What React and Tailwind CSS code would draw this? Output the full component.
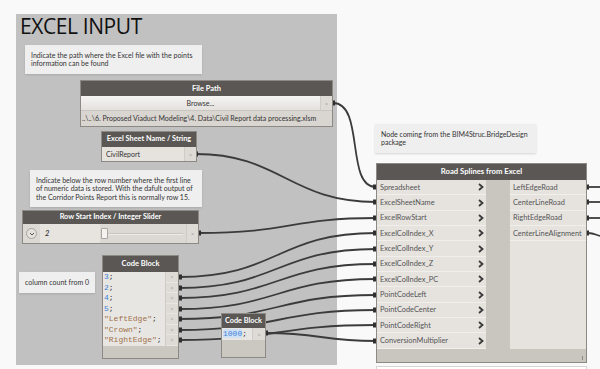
import React from "react";

const SANS = "font-['Lato','Open_Sans',sans-serif]";
const MONO = "font-['Liberation_Mono','DejaVu_Sans_Mono',monospace]";

function Port() {
  return (
    <div className="w-[12px] self-stretch flex items-center justify-center bg-[#dedad6] border-l border-[#cfcbc6] text-[6px] text-[#9a9692]">
      &gt;
    </div>
  );
}

function Chevron() {
  return (
    <svg width="6" height="8" viewBox="0 0 6 8" className="shrink-0">
      <path d="M1 1 L4.5 4 L1 7" fill="none" stroke="#3a3a3a" strokeWidth="1.8" />
    </svg>
  );
}

const inputs = [
  "Spreadsheet",
  "ExcelSheetName",
  "ExcelRowStart",
  "ExcelColIndex_X",
  "ExcelColIndex_Y",
  "ExcelColIndex_Z",
  "ExcelColIndex_PC",
  "PointCodeLeft",
  "PointCodeCenter",
  "PointCodeRight",
  "ConversionMultiplier",
];
const outputs = ["LeftEdgeRoad", "CenterLineRoad", "RightEdgeRoad", "CenterLineAlignment"];

const codeLines = [
  { t: "3", k: "n" },
  { t: "2", k: "n" },
  { t: "4", k: "n" },
  { t: "5", k: "n" },
  { t: '"LeftEdge"', k: "s" },
  { t: '"Crown"', k: "s" },
  { t: '"RightEdge"', k: "s" },
];

const codeY = [277, 288, 298, 309, 319, 330, 340];
const targetY = [233, 249, 264, 279, 295, 310, 325];

function wire(x1, y1, x2, y2) {
  const m = (x1 + x2) / 2;
  return `M${x1},${y1} C${m},${y1} ${m},${y2} ${x2},${y2}`;
}

export default function App() {
  const paths = [
    "M333,103 C365,103 345,187 376,187",
    "M196,154 C280,154 290,202 376,202",
    "M199,233 C290,233 290,218 376,218",
    ...codeY.map((y, i) => wire(179, y, 376, targetY[i])),
    wire(266, 333, 376, 341),
  ];
  const inPorts = [187, 202, 218, ...targetY, 341];
  return (
    <div className={`relative w-[600px] h-[369px] bg-[#f9f9f9] overflow-hidden ${SANS}`}>
      {/* group */}
      <div className="absolute left-[16px] top-[14px] w-[321px] h-[351px] bg-[#c1c1c1]">
        <div className="pl-[4px] text-[21px] leading-[24px] text-[#111] font-['Open_Sans',sans-serif] tracking-[-0.4px]">EXCEL INPUT</div>
      </div>

      {/* wires */}
      <svg className="absolute left-0 top-0" width="600" height="369">
        {paths.map((d, i) => (
          <path key={i} d={d} fill="none" stroke="#3b3b3b" strokeWidth="1.8" />
        ))}
        {inPorts.map((y, i) => (
          <rect key={i} x="373" y={y - 2.5} width="3" height="5" fill="#2f2f2f" />
        ))}
        {[187, 202, 218, 233].map((y, i) => (
          <g key={i}>
            <rect x="586" y={y - 2.5} width="3" height="5" fill="#2f2f2f" />
            <path d={i === 3 ? `M588,${y} C594,${y} 596,${y + 2} 600,${y + 3}` : `M588,${y} L600,${y}`} stroke="#3b3b3b" strokeWidth="1.8" fill="none" />
          </g>
        ))}
        {[103, 154, 233].map((y, i) => (
          <rect key={i} x={[332, 195, 198][i]} y={y - 2.5} width="3" height="5" fill="#2f2f2f" />
        ))}
        {codeY.map((y, i) => (
          <rect key={i} x="179" y={y - 2.5} width="3" height="5" fill="#2f2f2f" />
        ))}
        <rect x="265" y="330.5" width="3" height="5" fill="#2f2f2f" />
      </svg>

      {/* note 1 */}
      <div className="absolute left-[25px] top-[45px] w-[177px] h-[29px] bg-[#efefef] shadow-[0_1px_2px_rgba(0,0,0,0.12)] px-[6px] pt-[6px] text-[7px] leading-[8px] text-[#333] whitespace-nowrap">
        Indicate the path where the Excel file with the points
        <br />
        information can be found
      </div>

      {/* File Path node */}
      <div className="absolute left-[80px] top-[80px] w-[253px] border border-[#8d8a86] bg-[#d9d5d0] flex flex-col">
        <div className="h-[15px] bg-[#5a5755] flex items-center justify-center text-white font-bold text-[7.5px]">File Path</div>
        <div className="h-[15px] flex bg-gradient-to-b from-[#f6f5f3] to-[#e4e1dd] border-b border-[#c9c5c0]">
          <div className="flex-1 flex items-center justify-center text-[7px] text-[#333]">Browse...</div>
          <Port />
        </div>
        <div className="h-[15px] flex items-center pl-[1px] text-[7px] text-[#333] whitespace-nowrap">
          ..\..\6. Proposed Viaduct Modeling\4. Data\Civil Report data processing.xlsm
        </div>
      </div>

      {/* Excel Sheet Name */}
      <div className="absolute left-[101px] top-[131px] w-[96px] border border-[#8d8a86] bg-[#d9d5d0] flex flex-col">
        <div className="h-[15px] bg-[#5a5755] flex items-center justify-center text-white font-bold text-[7.3px] whitespace-nowrap">Excel Sheet Name / String</div>
        <div className="h-[14px] flex bg-[#e6e3df]">
          <div className="flex-1 flex items-center pl-[4px] text-[7px] text-[#333]">CivilReport</div>
          <Port />
        </div>
      </div>

      {/* note 2 */}
      <div className="absolute left-[30px] top-[170px] w-[172px] h-[37px] bg-[#efefef] shadow-[0_1px_2px_rgba(0,0,0,0.12)] pl-[6px] pt-[6px] text-[7px] leading-[8.3px] text-[#333] whitespace-nowrap">
        Indicate below the row number where the first line
        <br />
        of numeric data is stored. With the dafult output of
        <br />
        the Corridor Points Report this is normally row 15.
      </div>

      {/* Slider */}
      <div className="absolute left-[22px] top-[210px] w-[177px] border border-[#8d8a86] bg-[#d9d5d0] flex flex-col">
        <div className="h-[13px] bg-[#5a5755] flex items-center justify-center text-white font-bold text-[7.3px] whitespace-nowrap">Row Start Index / Integer Slider</div>
        <div className="h-[19px] flex items-center bg-[#dcd8d3]">
          <div className="w-[17px] flex items-center justify-center">
            <div className="w-[11px] h-[11px] rounded-full border border-[#a8a49f] bg-[#e4e1dd] flex items-center justify-center">
              <svg width="6" height="4" viewBox="0 0 6 4">
                <path d="M1 1 L3 3 L5 1" fill="none" stroke="#555" strokeWidth="1" />
              </svg>
            </div>
          </div>
          <div className="w-[60px] self-stretch flex items-center pl-[5px] bg-[#e7e4e0] text-[7.5px] text-[#222] italic">2</div>
          <div className="flex-1 relative self-stretch flex items-center">
            <div className="absolute left-[2px] right-[3px] top-1/2 h-[2px] -translate-y-1/2 bg-[#eeecea] border-t border-[#c9c5c0]" />
            <div className="absolute left-[1px] top-[4px] w-[7px] h-[11px] rounded-[1px] bg-[#f4f3f1] border border-[#a9a5a0]" />
          </div>
          <Port />
        </div>
      </div>

      {/* note 3: column count */}
      <div className="absolute left-[19px] top-[272px] w-[76px] h-[21px] bg-[#efefef] shadow-[0_1px_2px_rgba(0,0,0,0.12)] flex items-center justify-center text-[7px] text-[#333]">
        column count from 0
      </div>

      {/* Code Block 1 */}
      <div className="absolute left-[102px] top-[255px] w-[77px] h-[104px] border border-[#8d8a86] bg-[#cbc7c1] flex flex-col">
        <div className="h-[16px] bg-[#5a5755] flex items-center justify-center text-white font-bold text-[7.5px]">Code Block</div>
        <div className="flex bg-[#e8e6e3]">
          <div className={`flex-1 pl-[1px] ${MONO} text-[8px]`}>
            {codeLines.map((l, i) => (
              <div key={i} className="h-[10.5px] leading-[10.5px] whitespace-nowrap">
                <span className={l.k === "n" ? "text-[#3e82d6]" : "text-[#a0714a]"}>{l.t}</span>
                <span className="text-[#333]">;</span>
              </div>
            ))}
          </div>
          <div className="w-[13px] bg-[#dedad6] border-l border-[#cfcbc6] flex flex-col">
            {codeLines.map((l, i) => (
              <div key={i} className="h-[10.5px] flex items-center justify-center text-[6px] text-[#9a9692] border-b border-[#e8e6e3]">&gt;</div>
            ))}
          </div>
        </div>
      </div>

      {/* Code Block 2 */}
      <div className="absolute left-[221px] top-[313px] w-[45px] h-[45px] border border-[#8d8a86] bg-[#cbc7c1] flex flex-col">
        <div className="h-[14px] bg-[#5a5755] flex items-center justify-center text-white font-bold text-[7.3px] whitespace-nowrap">Code Block</div>
        <div className="h-[12px] flex bg-[#e8e6e3]">
          <div className={`flex-1 pl-[1px] ${MONO} text-[8px] leading-[12px]`}>
            <span className="text-[#3e82d6] bg-[#cfe0f5]">1000</span>
            <span className="text-[#333]">;</span>
          </div>
          <div className="w-[13px] bg-[#dedad6] border-l border-[#cfcbc6] flex items-center justify-center text-[6px] text-[#9a9692]">&gt;</div>
        </div>
      </div>

      {/* note 4 */}
      <div className="absolute left-[375px] top-[124px] w-[161px] h-[29px] bg-[#efefef] shadow-[0_1px_2px_rgba(0,0,0,0.15)] px-[6px] pt-[6px] text-[7px] leading-[8px] text-[#333] whitespace-nowrap">
        Node coming from the BIM4Struc.BridgeDesign
        <br />
        package
      </div>

      {/* Road Splines node */}
      <div className="absolute left-[376px] top-[163px] w-[211px] h-[200px] border border-[#8d8a86] bg-[#c9c5bf] flex flex-col">
        <div className="h-[16px] bg-[#5a5755] flex items-center justify-center text-white font-bold text-[7.7px]">Road Splines from Excel</div>
        <div className="flex">
          <div className="w-[109px] flex flex-col bg-[#e6e3df]">
            {inputs.map((n) => (
              <div key={n} className="h-[15.35px] flex items-center justify-between pl-[3px] pr-[2px] border-b border-[#f1efec] text-[7.4px] text-[#555]">
                <span>{n}</span>
                <Chevron />
              </div>
            ))}
          </div>
          <div className="flex-1" />
          <div className="w-[76px] flex flex-col bg-[#e6e3df]">
            {outputs.map((n) => (
              <div key={n} className="h-[15.35px] flex items-center pl-[3px] border-b border-[#f1efec] text-[7.4px] text-[#555] whitespace-nowrap">
                {n}
              </div>
            ))}
          </div>
        </div>
        <div className="flex-1 flex items-end justify-end pr-[3px] pb-[2px]">
          <div className="w-[1px] h-[4px] bg-[#8d8a86]" />
        </div>
      </div>

      {/* next note peeking at bottom */}
      <div className="absolute left-[376px] top-[366px] w-[211px] h-[10px] bg-white border border-[#d5d5d5]" />
    </div>
  );
}
